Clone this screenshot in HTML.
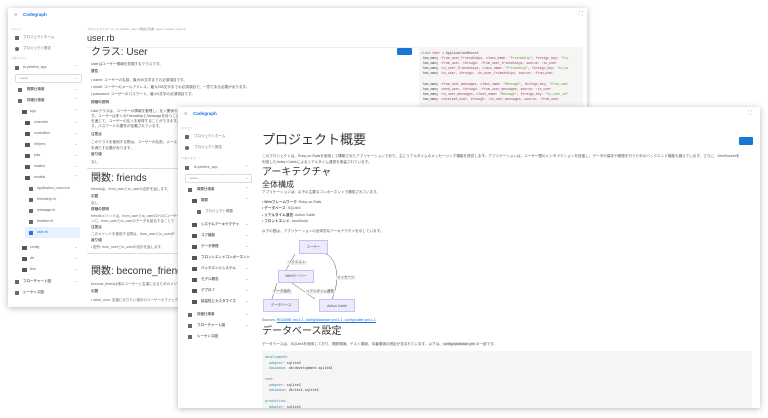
<!DOCTYPE html>
<html><head><meta charset="utf-8"><style>
*{margin:0;padding:0;box-sizing:border-box}
body{width:768px;height:418px;overflow:hidden;background:#fff;position:relative;font-family:"Liberation Sans","Noto Sans CJK JP",sans-serif;color:#333}
.w{position:absolute;background:#fff;box-shadow:0 1px 6px rgba(0,0,0,.28);overflow:hidden}
.a{position:absolute;white-space:nowrap;line-height:1}
.t{font-size:3.6px;color:#555}
.s{font-size:3.5px;color:#666}
.g{font-size:3px;color:#999}
.b{font-weight:bold}
.ic{position:absolute;width:4px;height:4px;background:#666;border-radius:.5px}
.fd{position:absolute;width:5px;height:4px;background:#555;border-radius:.5px}
.ch{position:absolute;font-size:4px;color:#888;line-height:1}
.box{position:absolute;background:#ecebfe;border:1px solid #c6c3f0;font-size:3.5px;color:#555;display:flex;align-items:center;justify-content:center}
.lb{position:absolute;background:#eee;font-size:3.5px;color:#555;line-height:1;padding:0 1px}
.code{position:absolute;background:#f6f5f3;font-family:"Liberation Mono",monospace;font-size:3.5px}
.k{color:#2a8bb5}.str{color:#6a9a3c}.sy{color:#a3366e}
</style></head><body>

<!-- back window -->
<div class="w" style="left:8px;top:8px;width:579px;height:299px">
 <div class="a" style="left:6px;top:5px;font-size:4px;color:#999">⚙</div>
 <div class="a b" style="left:15px;top:5px;font-size:4.5px;color:#1a73e8">Codegraph</div>
 <div class="a g" style="left:3px;top:20px">メニュー</div>
 <div class="ic" style="left:7px;top:28px"></div><div class="a s" style="left:15px;top:28px">プロジェクトホーム</div>
 <div class="ic" style="left:7px;top:39px;border-radius:50%"></div><div class="a s" style="left:15px;top:39px">プロジェクト設定</div>
 <div class="a g" style="left:3px;top:49px">リポジトリ</div>
 <div class="ic" style="left:7px;top:58px"></div><div class="a s" style="left:15px;top:58px">tk-yeb/live_app</div><div class="ch" style="left:66px;top:57px">⌃</div>
 <div style="position:absolute;left:7px;top:66px;width:67px;height:9px;border:1px solid #ddd;border-radius:2px"></div>
 <div class="a g" style="left:11px;top:69px">master</div><div class="ch" style="left:66px;top:68px">⌄</div>
 <div class="ic" style="left:10px;top:80px"></div><div class="a s b" style="left:19px;top:80px">概要仕様書</div><div class="ch" style="left:66px;top:79px">⌄</div>
 <div class="ic" style="left:10px;top:91px"></div><div class="a s b" style="left:19px;top:91px">詳細仕様書</div><div class="ch" style="left:66px;top:90px">⌃</div>
 <div class="fd" style="left:14px;top:102px"></div><div class="a s" style="left:22px;top:102px">app</div><div class="ch" style="left:66px;top:101px">⌃</div>
 <div class="fd" style="left:17px;top:113px"></div><div class="a s" style="left:26px;top:113px">channels</div><div class="ch" style="left:66px;top:112px">⌄</div>
 <div class="fd" style="left:17px;top:124px"></div><div class="a s" style="left:26px;top:124px">controllers</div><div class="ch" style="left:66px;top:123px">⌄</div>
 <div class="fd" style="left:17px;top:135px"></div><div class="a s" style="left:26px;top:135px">helpers</div><div class="ch" style="left:66px;top:134px">⌄</div>
 <div class="fd" style="left:17px;top:146px"></div><div class="a s" style="left:26px;top:146px">jobs</div><div class="ch" style="left:66px;top:145px">⌄</div>
 <div class="fd" style="left:17px;top:157px"></div><div class="a s" style="left:26px;top:157px">mailers</div><div class="ch" style="left:66px;top:156px">⌄</div>
 <div class="fd" style="left:17px;top:168px"></div><div class="a s" style="left:26px;top:168px">models</div><div class="ch" style="left:66px;top:167px">⌃</div>
 <div class="ic" style="left:21px;top:179px"></div><div class="a s" style="left:29px;top:179px">application_record.rb</div>
 <div class="ic" style="left:21px;top:190px"></div><div class="a s" style="left:29px;top:190px">friendship.rb</div>
 <div class="ic" style="left:21px;top:201px"></div><div class="a s" style="left:29px;top:201px">message.rb</div>
 <div class="ic" style="left:21px;top:212px"></div><div class="a s" style="left:29px;top:212px">timeline.rb</div>
 <div style="position:absolute;left:17px;top:219px;width:55px;height:11px;background:#e8f0fe"></div>
 <div class="ic" style="left:21px;top:223px;background:#1a73e8"></div><div class="a s" style="left:29px;top:223px;color:#1a73e8">user.rb</div>
 <div class="fd" style="left:14px;top:238px"></div><div class="a s" style="left:22px;top:238px">config</div><div class="ch" style="left:66px;top:237px">⌄</div>
 <div class="fd" style="left:14px;top:249px"></div><div class="a s" style="left:22px;top:249px">db</div><div class="ch" style="left:66px;top:248px">⌄</div>
 <div class="fd" style="left:14px;top:260px"></div><div class="a s" style="left:22px;top:260px">test</div><div class="ch" style="left:66px;top:259px">⌄</div>
 <div class="ic" style="left:7px;top:272px"></div><div class="a s b" style="left:15px;top:272px">フローチャート図</div><div class="ch" style="left:66px;top:271px">⌄</div>
 <div class="ic" style="left:7px;top:283px"></div><div class="a s b" style="left:15px;top:283px">シーケンス図</div>

 <div class="a g" style="left:79px;top:20px">プロジェクトホーム / tk-yeb/live_app / 詳細仕様書 / app / models / user.rb</div>
 <div class="a" style="left:79px;top:26px;font-size:9px;color:#333">user.rb</div>
 <div style="position:absolute;left:79px;top:39px;width:328px;height:1px;background:#eee"></div>
 <div class="a" style="left:83px;top:40px;font-size:10px;color:#333">クラス: User</div>
 <div style="position:absolute;left:389px;top:40px;width:15px;height:7px;background:#1976d2;border-radius:1px"></div>
 <div class="a t" style="left:83px;top:55px">Userはユーザー情報を表現するクラスです。</div>
 <div class="a t b" style="left:83px;top:62px">属性</div>
 <div class="a t" style="left:83px;top:71px">• name: ユーザーの名前。最大50文字までの必須項目です。</div>
 <div class="a t" style="left:83px;top:78px">• email: ユーザーのメールアドレス。最大255文字までの必須項目で、一意である必要があります。</div>
 <div class="a t" style="left:83px;top:85px">• password: ユーザーのパスワード。最小6文字の必須項目です。</div>
 <div class="a t b" style="left:83px;top:93px">詳細の説明</div>
 <div class="a t" style="left:83px;top:102px">Userクラスは、ユーザーの情報を管理し、友人関係やメッセージの送受信を</div>
 <div class="a t" style="left:83px;top:107px">す。ユーザーは多くのFriendshipとMessageを持つことができ、</div>
 <div class="a t" style="left:83px;top:112px">を通じて、ユーザーの友人を取得することができます。また、</div>
 <div class="a t" style="left:83px;top:117px">ス、パスワードの要件が定義されています。</div>
 <div class="a t b" style="left:83px;top:125px">注意点</div>
 <div class="a t" style="left:83px;top:133px">このクラスを使用する際は、ユーザーの名前、メールアドレス</div>
 <div class="a t" style="left:83px;top:139px">を満たす必要があります。</div>
 <div class="a t b" style="left:83px;top:145px">返り値</div>
 <div class="a t" style="left:83px;top:153px">なし</div>
 <div style="position:absolute;left:79px;top:160px;width:330px;height:1px;background:#ddd"></div>
 <div class="a" style="left:83px;top:166px;font-size:10px;color:#333">関数: friends</div>
 <div class="a s" style="left:83px;top:180px">friendsは、from_userとto_userの合計を返します。</div>
 <div class="a t b" style="left:83px;top:187px">引数</div>
 <div class="a t" style="left:83px;top:194px">なし</div>
 <div class="a t b" style="left:83px;top:200px">詳細の説明</div>
 <div class="a s" style="left:83px;top:207px">friendsメソッドは、from_userとto_userの2つのユーザーの</div>
 <div class="a s" style="left:83px;top:212px">ンに、from_userとto_userのデータを結合することで</div>
 <div class="a t b" style="left:83px;top:218px">注意点</div>
 <div class="a s" style="left:83px;top:225px">このメソッドを使用する際は、from_userとto_userが</div>
 <div class="a t b" style="left:83px;top:231px">返り値</div>
 <div class="a s" style="left:83px;top:238px">• 配列: from_userとto_userの合計を返します。</div>
 <div style="position:absolute;left:79px;top:245px;width:330px;height:1px;background:#ddd"></div>
 <div class="a" style="left:83px;top:259px;font-size:10px;color:#333">関数: become_friend</div>
 <div class="a s" style="left:83px;top:275px">become_friendは他のユーザーと友達になるためのメソッドです。</div>
 <div class="a t b" style="left:83px;top:282px">引数</div>
 <div class="a s" style="left:83px;top:291px">• other_user: 友達になりたい相手のユーザーオブジェクト</div>

 <div class="code" style="left:411px;top:39px;width:164px;height:80px"></div>
 <div class="a" style="left:413px;top:43px;font-family:'Liberation Mono',monospace;font-size:3.2px;line-height:5.1px;color:#444">
  <span class="k">class</span> <span class="sy">User</span> &lt; ApplicationRecord<br>
  &nbsp;has_many <span class="sy">:from_user_friendships, class_name:</span> <span class="str">"Friendship"</span>, <span class="sy">foreign_key: </span><span class="str">"fro</span><br>
  &nbsp;has_many <span class="sy">:from_user, through: :from_user_friendships, source: :to_user</span><br>
  &nbsp;has_many <span class="sy">:to_user_friendships, class_name:</span> <span class="str">"Friendship"</span>, <span class="sy">foreign_key: </span><span class="str">"to_us</span><br>
  &nbsp;has_many <span class="sy">:to_user, through: :to_user_friendships, source: :from_user</span><br><br>
  &nbsp;has_many <span class="sy">:from_user_messages, class_name:</span> <span class="str">"Message"</span>, <span class="sy">foreign_key: </span><span class="str">"from_user</span><br>
  &nbsp;has_many <span class="sy">:send_user, through: :from_user_messages, source: :to_user</span><br>
  &nbsp;has_many <span class="sy">:to_user_messages, class_name:</span> <span class="str">"Message"</span>, <span class="sy">foreign_key: </span><span class="str">"to_user_id"</span><br>
  &nbsp;has_many <span class="sy">:received_user, through: :to_user_messages, source: :from_user</span>
 </div>
 <div class="a" style="left:571px;top:4px;font-size:5px;color:#5cb85c">⛶</div>
</div>

<!-- front window -->
<div class="w" style="left:178px;top:107px;width:582px;height:301px">
 <div class="a" style="left:6px;top:5px;font-size:4px;color:#999">⚙</div>
 <div class="a b" style="left:15px;top:5px;font-size:4.5px;color:#1a73e8">Codegraph</div>
 <div class="a" style="left:570px;top:4px;font-size:5px;color:#5cb85c">⛶</div>
 <div class="a g" style="left:3px;top:20px">メニュー</div>
 <div class="ic" style="left:7px;top:28px"></div><div class="a s" style="left:16px;top:28px">プロジェクトホーム</div>
 <div class="ic" style="left:7px;top:39px;border-radius:50%"></div><div class="a s" style="left:16px;top:39px">プロジェクト設定</div>
 <div class="a g" style="left:3px;top:50px">リポジトリ</div>
 <div class="ic" style="left:7px;top:59px"></div><div class="a s" style="left:16px;top:59px">tk-yeb/live_app</div><div class="ch" style="left:67px;top:58px">⌃</div>
 <div style="position:absolute;left:7px;top:67px;width:67px;height:9px;border:1px solid #ddd;border-radius:2px"></div>
 <div class="a g" style="left:11px;top:70px">master</div><div class="ch" style="left:67px;top:69px">⌄</div>
 <div class="ic" style="left:10px;top:81px"></div><div class="a s b" style="left:19px;top:81px">概要仕様書</div><div class="ch" style="left:67px;top:80px">⌃</div>
 <div class="fd" style="left:14px;top:92px"></div><div class="a s b" style="left:23px;top:92px">概要</div><div class="ch" style="left:67px;top:91px">⌃</div>
 <div class="ic" style="left:19px;top:103px"></div><div class="a s" style="left:27px;top:103px">プロジェクト概要</div>
 <div class="fd" style="left:14px;top:116px"></div><div class="a s b" style="left:23px;top:116px">システムアーキテクチャ</div><div class="ch" style="left:67px;top:115px">⌄</div>
 <div class="fd" style="left:14px;top:127px"></div><div class="a s b" style="left:23px;top:127px">コア機能</div><div class="ch" style="left:67px;top:126px">⌄</div>
 <div class="fd" style="left:14px;top:138px"></div><div class="a s b" style="left:23px;top:138px">データ管理</div><div class="ch" style="left:67px;top:137px">⌄</div>
 <div class="fd" style="left:14px;top:149px"></div><div class="a s b" style="left:23px;top:149px">フロントエンドコンポーネント</div>
 <div class="fd" style="left:14px;top:160px"></div><div class="a s b" style="left:23px;top:160px">バックエンドシステム</div><div class="ch" style="left:67px;top:159px">⌄</div>
 <div class="fd" style="left:14px;top:171px"></div><div class="a s b" style="left:23px;top:171px">モデル概念</div><div class="ch" style="left:67px;top:170px">⌄</div>
 <div class="fd" style="left:14px;top:182px"></div><div class="a s b" style="left:23px;top:182px">デプロイ</div><div class="ch" style="left:67px;top:181px">⌄</div>
 <div class="fd" style="left:14px;top:193px"></div><div class="a s b" style="left:23px;top:193px">拡張性とカスタマイズ</div><div class="ch" style="left:67px;top:192px">⌄</div>
 <div class="ic" style="left:10px;top:206px"></div><div class="a s b" style="left:19px;top:206px">詳細仕様書</div><div class="ch" style="left:67px;top:205px">⌄</div>
 <div class="ic" style="left:10px;top:217px"></div><div class="a s b" style="left:19px;top:217px">フローチャート図</div><div class="ch" style="left:67px;top:216px">⌄</div>
 <div class="ic" style="left:10px;top:228px"></div><div class="a s b" style="left:19px;top:228px">シーケンス図</div>

 <div class="a" style="left:84px;top:26px;font-size:13px;color:#333">プロジェクト概要</div>
 <div style="position:absolute;left:561px;top:30px;width:14px;height:8px;background:#1976d2;border-radius:1px"></div>
 <div class="a t" style="left:84px;top:46px;white-space:normal;width:480px;line-height:6px">このプロジェクトは、Ruby on Railsを使用して構築されたアプリケーションであり、主にリアルタイムのメッセージング機能を提供します。アプリケーションは、ユーザー間のインタラクションを促進し、データの保存や管理を行うためのバックエンド機能も備えています。さらに、WebSocketを利用したAction Cableによるリアルタイム通信を実装されています。</div>
 <div class="a" style="left:84px;top:61px;font-size:10px;color:#333">アーキテクチャ</div>
 <div class="a" style="left:84px;top:74px;font-size:8px;color:#333">全体構成</div>
 <div class="a t" style="left:84px;top:84px">アプリケーションは、以下の主要なコンポーネントで構成されています。</div>
 <div class="a t" style="left:84px;top:94px">• <b>Webフレームワーク</b>: Ruby on Rails</div>
 <div class="a t" style="left:84px;top:100px">• <b>データベース</b>: SQLite3</div>
 <div class="a t" style="left:84px;top:107px">• <b>リアルタイム通信</b>: Action Cable</div>
 <div class="a t" style="left:84px;top:113px">• <b>フロントエンド</b>: JavaScript</div>
 <div class="a t" style="left:84px;top:123px">以下の図は、アプリケーションの全体的なアーキテクチャを示しています。</div>

 <svg style="position:absolute;left:84px;top:130px" width="110" height="80">
  <g stroke="#555" stroke-width=".5" fill="none">
   <line x1="33" y1="17" x2="24" y2="33"/>
   <line x1="15" y1="46" x2="10" y2="62"/>
   <line x1="30" y1="46" x2="53" y2="62"/>
   <path d="M70 62 C78 45 76 22 64 17"/>
  </g>
 </svg>
 <div class="box" style="left:121px;top:133px;width:29px;height:14px">ユーザー</div>
 <div class="box" style="left:100px;top:163px;width:36px;height:13px">Webサーバー</div>
 <div class="box" style="left:85px;top:192px;width:36px;height:13px">データベース</div>
 <div class="box" style="left:141px;top:192px;width:36px;height:13px">Action Cable</div>
 <div class="lb" style="left:109px;top:154px">リクエスト</div>
 <div class="lb" style="left:158px;top:169px">メッセージ</div>
 <div class="lb" style="left:94px;top:183px">データ保存</div>
 <div class="lb" style="left:127px;top:183px">リアルタイム通信</div>

 <div class="a s" style="left:84px;top:212px">Sources: <span style="color:#1a73e8;text-decoration:underline">README.md:1-1, config/database.yml:1-1, config/cable.yml:1-1</span></div>
 <div class="a" style="left:84px;top:220px;font-size:10px;color:#333">データベース設定</div>
 <div class="a t" style="left:84px;top:236px">データベースは、SQLite3を使用しており、開発環境、テスト環境、本番環境の設定が含まれています。以下は、<span style="background:#eee">config/database.yml</span> の一部です。</div>
 <div class="code" style="left:84px;top:244px;width:490px;height:60px"></div>
 <div class="a" style="left:87px;top:248px;font-family:'Liberation Mono',monospace;font-size:3.3px;line-height:5.5px;color:#333">
  <span class="k">development:</span><br>&nbsp;&nbsp;<span class="k">adapter:</span> sqlite3<br>&nbsp;&nbsp;<span class="k">database:</span> db/development.sqlite3<br><br>
  <span class="k">test:</span><br>&nbsp;&nbsp;<span class="k">adapter:</span> sqlite3<br>&nbsp;&nbsp;<span class="k">database:</span> db/test.sqlite3<br><br>
  <span class="k">production:</span><br>&nbsp;&nbsp;<span class="k">adapter:</span> sqlite3
 </div>
</div>
</body></html>
